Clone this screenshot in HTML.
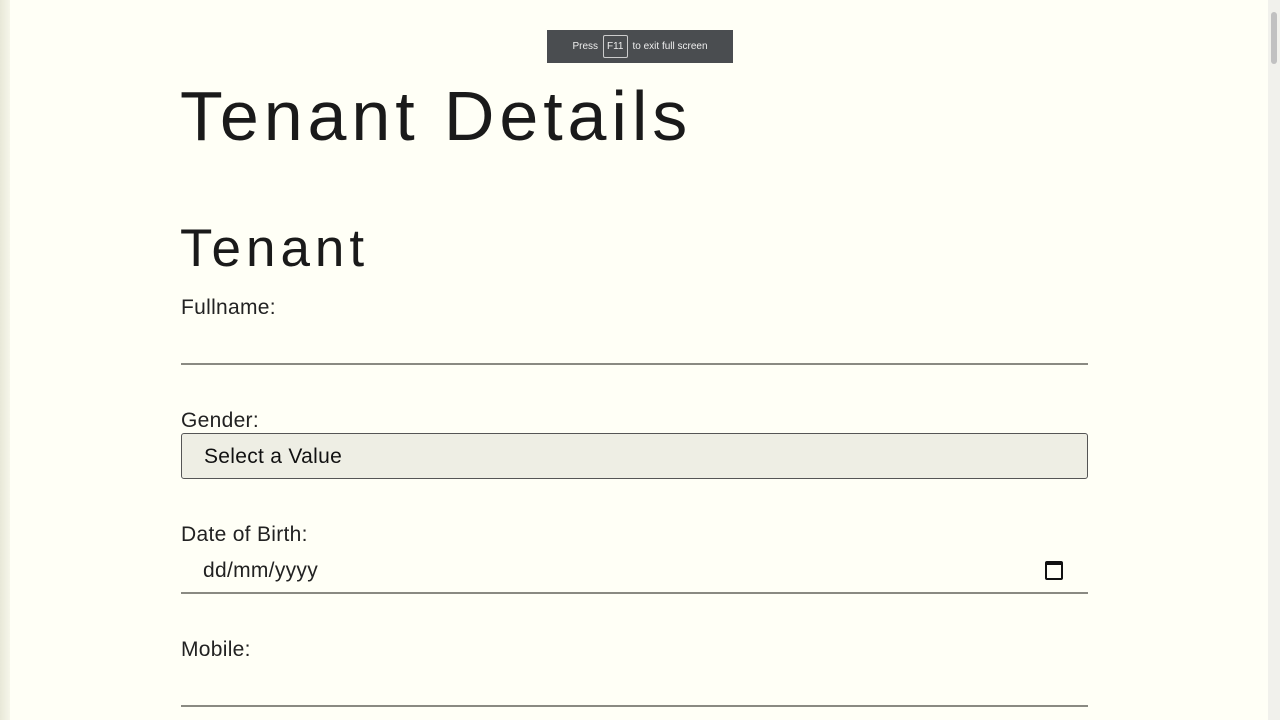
<!DOCTYPE html>
<html><head><style>
html,body{margin:0;padding:0;}
body{width:1280px;height:720px;overflow:hidden;background:#fffff6;position:relative;font-family:"Liberation Sans",sans-serif;color:#111;}
.lstrip{position:absolute;left:0;top:0;width:10px;height:720px;background:linear-gradient(90deg,#e8e8d8,#f6f6ea);}
.sb{position:absolute;right:0;top:0;width:12px;height:720px;background:#f1f1ec;}
.sb div{position:absolute;left:3px;top:12px;width:6px;height:52px;background:#c1c1c1;border-radius:3px;}
.toast{position:absolute;left:547px;top:30px;width:186px;height:33px;background:#4a4d50;color:#eee;font-size:10px;display:flex;align-items:center;justify-content:center;gap:4px;}
.toast span.k{border:1px solid #ccc;border-radius:2px;padding:5px 3px;margin:0 1px;}
h1{position:absolute;left:180px;top:76px;margin:0;font-weight:normal;font-size:70px;letter-spacing:4.9px;color:#1a1a1a;}
h2{position:absolute;left:180px;top:218px;margin:0;font-weight:normal;font-size:53px;letter-spacing:5px;color:#1a1a1a;}
.lbl{position:absolute;left:181px;font-size:21px;color:#222;letter-spacing:0.3px;}
.line{position:absolute;left:181px;width:907px;height:2px;background:#8a8a82;}
.sel{position:absolute;left:181px;top:433px;width:905px;height:44px;border:1px solid #555;border-radius:3px;background:#eeeee4;font-size:21px;line-height:46px;box-sizing:content-box;letter-spacing:0.3px;}
.sel span{margin-left:22px;}
.date{position:absolute;left:203px;top:559px;font-size:21px;color:#222;letter-spacing:0.3px;}
.cal{position:absolute;left:1045px;top:561px;width:14px;height:13px;border:2px solid #111;border-top-width:4px;border-radius:2px;}
</style></head><body>
<div class="lstrip"></div>
<div class="sb"><div></div></div>
<div class="toast">Press <span class="k">F11</span> to exit full screen</div>
<h1>Tenant Details</h1>
<h2>Tenant</h2>
<div class="lbl" style="top:296px">Fullname:</div>
<div class="line" style="top:363px"></div>
<div class="lbl" style="top:409px">Gender:</div>
<div class="sel"><span>Select a Value</span></div>
<div class="lbl" style="top:523px">Date of Birth:</div>
<div class="date">dd/mm/yyyy</div>
<div class="cal"></div>
<div class="line" style="top:592px"></div>
<div class="lbl" style="top:638px">Mobile:</div>
<div class="line" style="top:705px"></div>
</body></html>
